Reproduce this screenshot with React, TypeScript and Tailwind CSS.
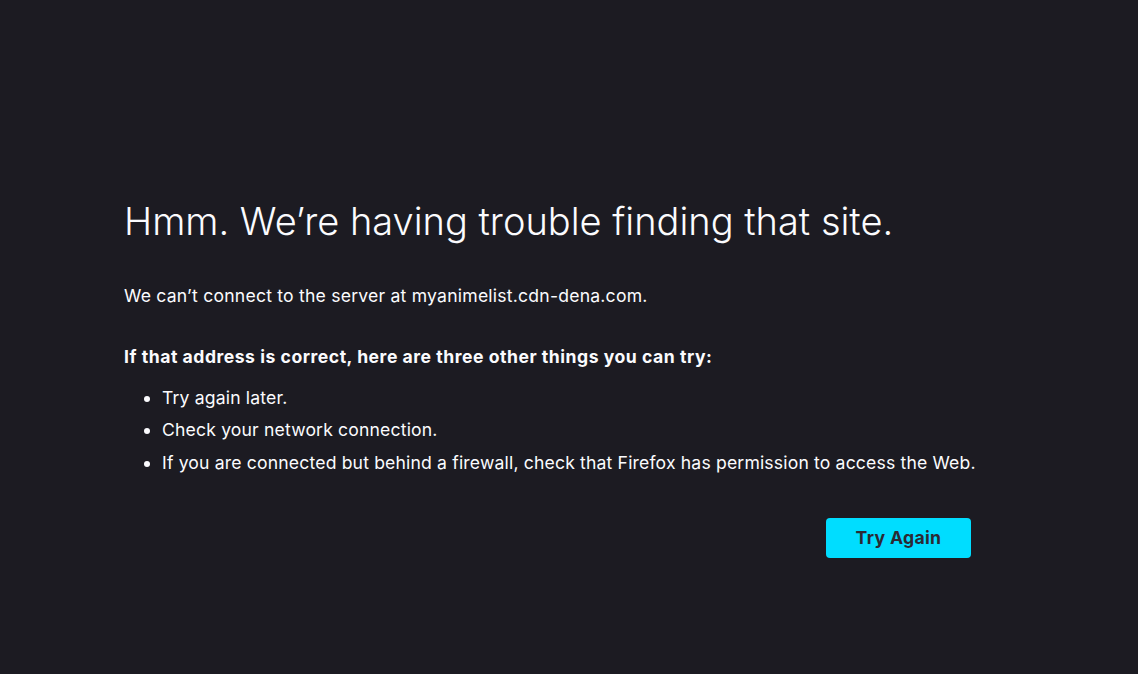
export default function App() {
  const tips = [
    "Try again later.",
    "Check your network connection.",
    "If you are connected but behind a firewall, check that Firefox has permission to access the Web.",
  ];

  return (
    <div
      className="min-h-[674px] w-full bg-[#1c1b22] text-[#fbfbfe] pl-[124px] pt-[197px]"
      style={{ fontFamily: "Inter, 'Noto Sans', sans-serif" }}
    >
      <div className="w-[847px]">
        <h1 className="text-[38px] leading-[48px] font-light">
          Hmm. We’re having trouble finding that site.
        </h1>

        <p className="mt-[39px] text-[17.6px] leading-[24px] tracking-[0.21px]">
          We can’t connect to the server at myanimelist.cdn-dena.com.
        </p>

        <p className="mt-[37px] text-[17.6px] leading-[24px] font-bold tracking-[0.52px]">
          If that address is correct, here are three other things you can try:
        </p>

        <ul className="mt-[17px] pl-[38px] list-disc text-[17.6px] leading-[24px] tracking-[0.16px] whitespace-nowrap flex flex-col gap-[8.25px]">
          {tips.map((t) => (
            <li key={t}>{t}</li>
          ))}
        </ul>

        <div className="flex justify-end mt-[43.5px]">
          <button className="h-[40px] w-[145px] rounded-[4px] bg-[#00ddff] text-[#2b2a33] text-[17.6px] font-bold tracking-[0.35px]">
            Try Again
          </button>
        </div>
      </div>
    </div>
  );
}
